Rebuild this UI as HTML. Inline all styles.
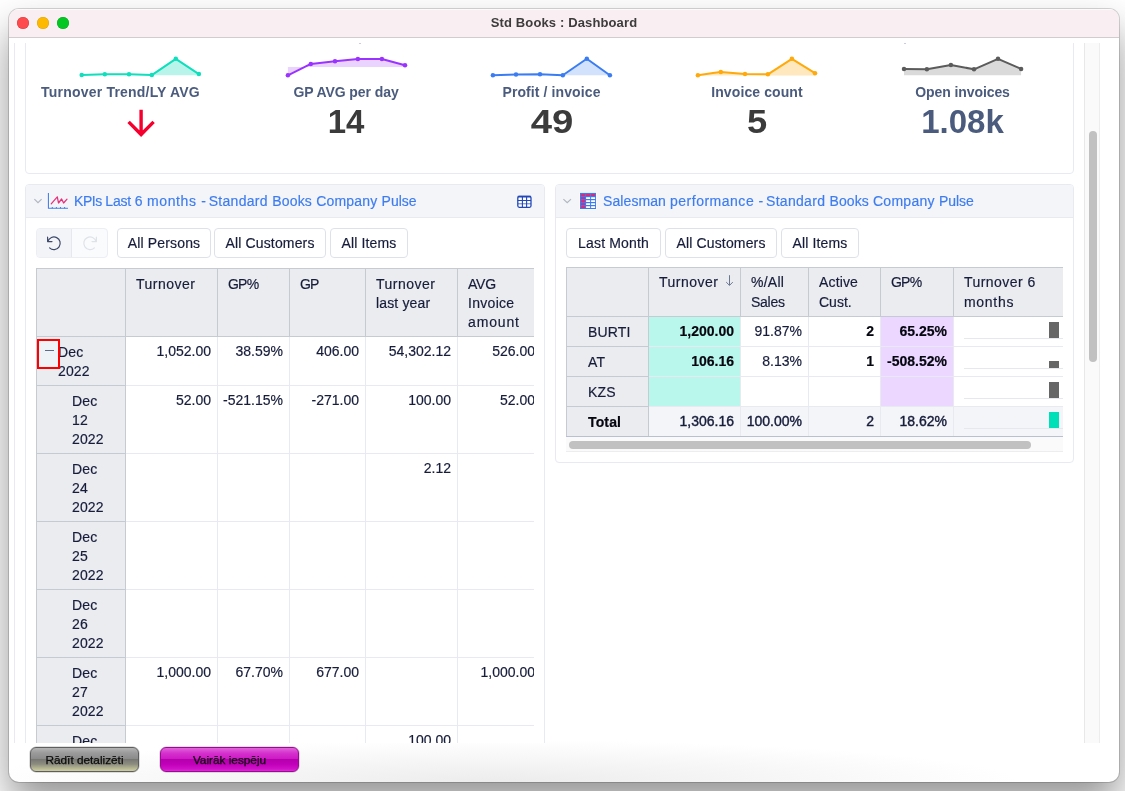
<!DOCTYPE html>
<html lang="en">
<head>
<meta charset="utf-8">
<title>Std Books : Dashboard</title>
<style>
*{box-sizing:border-box;margin:0;padding:0}
html,body{width:1125px;height:791px;overflow:hidden;background:#fff}
body{font-family:"Liberation Sans",sans-serif;position:relative;background:#fff}
.abs{position:absolute}
#win{position:absolute;left:9px;top:9px;width:1110px;height:773px;background:radial-gradient(ellipse 520px 42px at 44% 100%,#ececec 0,rgba(255,255,255,0) 100%) #fff;border-radius:10px;
  box-shadow:0 0 0 1px rgba(0,0,0,.16),0 22px 40px 0 rgba(0,0,0,.42);overflow:hidden;will-change:transform}
#tbar{position:absolute;left:0;top:0;width:100%;height:29px;background:#f9eff3;border-bottom:1px solid #d2ccce;box-shadow:inset 0 1px 0 rgba(255,255,255,.7);
  text-align:center;font-weight:700;font-size:13px;line-height:28px;color:#3d3b3c;letter-spacing:.13px}
.tl{position:absolute;top:8px;width:12px;height:12px;border-radius:50%}
/* web view : page coords x14..1100, y43..743 => win coords x5..1091, y35..735 */
#web{position:absolute;left:5px;top:34px;width:1086px;height:700px;overflow:hidden;
  font-size:14px;color:#161c3a;letter-spacing:.15px;-webkit-text-stroke:.18px}
#vsb{position:absolute;left:1070px;top:0;width:16px;height:700px;background:#fafafa;border-left:1px solid #e8e8e8;border-right:1px solid #ededed}
#vsb i{position:absolute;left:4px;top:88px;width:8px;height:231px;border-radius:4px;background:#c1c1c1}
.panel{position:absolute;border:1px solid #e9eaf1;border-radius:4px;background:#fff}
.phead{position:absolute;left:0;top:0;right:0;height:33px;background:#f4f5f8;border-bottom:1px solid #e9eaf1;border-radius:3px 3px 0 0}
.ptitle{position:absolute;top:0;line-height:33px;color:#3d7cf0;font-size:14px;white-space:nowrap;letter-spacing:.14px}
.btn{position:absolute;top:43px;height:30px;border:1px solid #dfe1e8;border-radius:4px;background:#fff;line-height:29px;text-align:center;white-space:nowrap;color:#161c3a}
table{border-collapse:separate;border-spacing:0;table-layout:fixed;position:absolute}
td,th{font-weight:400;vertical-align:top;line-height:19px;padding:6px 6px 4px 10px;overflow:hidden}
.klab{-webkit-text-stroke:0;position:absolute;top:41px;width:206px;text-align:center;font-weight:700;font-size:14px;line-height:16px;color:#4a5b7d;letter-spacing:-.08px;white-space:nowrap}
.knum{-webkit-text-stroke:0;position:absolute;top:61px;width:206px;text-align:center;font-weight:700;font-size:33px;line-height:36px;color:#3b3b3b;letter-spacing:0;white-space:nowrap}
.mbtn{position:absolute;top:738px;height:25px;border:1px solid #5e5e5e;border-radius:6px;text-align:center;font-size:11.8px;line-height:24px;color:#0c0c0c;-webkit-text-stroke:.25px #0c0c0c;white-space:nowrap;box-shadow:0 0 0 .5px rgba(0,0,0,.25)}
table.lt,table.rt{border-left:1px solid #c5cad3;border-top:1px solid #c5cad3}
th{background:#ebecf0;border-right:1px solid #c5cad3;border-bottom:1px solid #c5cad3;text-align:left}
td{border-right:1px solid #e9eaf1;border-bottom:1px solid #e9eaf1;text-align:right;white-space:nowrap;letter-spacing:0;padding-left:2px}
.lt tr{height:68px}.lt tr.r1{height:49px}
.lt th.sub{padding-left:35px}
.rt tr{height:30px}.rt tr.hr{height:49px}
.rt td,.rt th{padding-top:5px;padding-bottom:4px}
.lt td,.lt th{padding-top:4.6px;padding-bottom:5.4px}
.lt .hr th{padding-top:6px;padding-bottom:4px}
.lt tr:not(.hr) th{padding-top:6px;padding-bottom:4px}
.rt tr:not(.hr) th{padding-left:21px}
.rt tr.hr th{line-height:19.5px;padding-top:5.2px;padding-bottom:3px}
.b{font-weight:700;color:#05060f}
.rt tr:not(.hr) th{padding-top:6px;padding-bottom:3px}
.tq{background:#b9f6ec}.pu{background:#ebd7ff}
.tot td{background:#f4f5f8;-webkit-text-stroke:.4px #161c3a}
td.bar{position:relative;padding:0}
td.bar:before{content:"";position:absolute;left:10px;right:0;top:21px;height:1px;background:#e6e8ed}
td.bar i{position:absolute;left:95px;width:10px;background:#666}
</style>
</head>
<body>
<div id="win">
  <div id="tbar">Std Books : Dashboard
    <span class="tl" style="left:8px;background:#fe4a4c;box-shadow:inset 0 0 0 .5px #e0393b"></span>
    <span class="tl" style="left:28px;background:#fdb900;box-shadow:inset 0 0 0 .5px #e0a300"></span>
    <span class="tl" style="left:48px;background:#04c723;box-shadow:inset 0 0 0 .5px #03ae1f"></span>
  </div>
  <div id="web">
    <div id="vsb"><i></i></div>
    <div class="abs" style="left:0;top:0;width:1px;height:700px;background:#e9eaf1"></div>
    <div class="panel" style="left:11px;top:-20px;width:1049px;height:151px"></div>
    <svg class="abs" style="left:0;top:0" width="1086" height="700" viewBox="14 42.7 1086 700" fill="none" stroke-linejoin="round" stroke-linecap="round">
      <!-- sparkline 1 -->
      <polygon points="151.8,74.8 175.8,58.5 198.9,73.8 198.9,75 151.8,75" fill="#b9f4ea"/>
      <polyline points="81.7,74.8 104.8,73.9 129,73.9 151.8,74.8 175.8,58.5 198.9,73.8" stroke="#0fdfbc" stroke-width="2"/>
      <g fill="#0fdfbc"><circle cx="81.7" cy="74.8" r="2.25"/><circle cx="104.8" cy="73.9" r="2.25"/><circle cx="129" cy="73.9" r="2.25"/><circle cx="151.8" cy="74.8" r="2.25"/><circle cx="175.8" cy="58.5" r="2.25"/><circle cx="198.9" cy="73.8" r="2.25"/></g>
      <!-- sparkline 2 -->
      <polygon points="287.9,75 310.8,63.6 335,61 357.9,58.7 381.9,58.7 405,64.9 405,66.7 287.9,66.7" fill="#ead3ff"/>
      <polyline points="287.9,75 310.8,63.6 335,61 357.9,58.7 381.9,58.7 405,64.9" stroke="#9a33ff" stroke-width="2"/>
      <g fill="#9a33ff"><circle cx="287.9" cy="75" r="2.25"/><circle cx="310.8" cy="63.6" r="2.25"/><circle cx="335" cy="61" r="2.25"/><circle cx="357.9" cy="58.7" r="2.25"/><circle cx="381.9" cy="58.7" r="2.25"/><circle cx="405" cy="64.9" r="2.25"/></g>
      <!-- sparkline 3 -->
      <polygon points="562.8,75 586.8,58.5 609.9,75" fill="#d2e1fc"/>
      <polyline points="492.9,75 516,74.3 540,73.9 562.8,75 586.8,58.5 609.9,75" stroke="#3a7df2" stroke-width="2"/>
      <g fill="#3a7df2"><circle cx="492.9" cy="75" r="2.25"/><circle cx="516" cy="74.3" r="2.25"/><circle cx="540" cy="73.9" r="2.25"/><circle cx="562.8" cy="75" r="2.25"/><circle cx="586.8" cy="58.5" r="2.25"/><circle cx="609.9" cy="75" r="2.25"/></g>
      <!-- sparkline 4 -->
      <polygon points="697.9,75 720.8,71.6 745,73.8 767.9,74 791.9,58.5 815,72.9 815,75.2 697.9,75.2" fill="#ffe8bd"/>
      <polyline points="697.9,75 720.8,71.6 745,73.8 767.9,74 791.9,58.5 815,72.9" stroke="#ffa90a" stroke-width="2"/>
      <g fill="#ffa90a"><circle cx="697.9" cy="75" r="2.25"/><circle cx="720.8" cy="71.6" r="2.25"/><circle cx="745" cy="73.8" r="2.25"/><circle cx="767.9" cy="74" r="2.25"/><circle cx="791.9" cy="58.5" r="2.25"/><circle cx="815" cy="72.9" r="2.25"/></g>
      <!-- sparkline 5 -->
      <polygon points="904,68.6 926.9,69 950.9,64.7 974,69 998,58.5 1021.1,68.6 1021.1,75 904,75" fill="#dadada"/>
      <polyline points="904,68.6 926.9,69 950.9,64.7 974,69 998,58.5 1021.1,68.6" stroke="#5b5b5b" stroke-width="2"/>
      <g fill="#5b5b5b"><circle cx="904" cy="68.6" r="2.25"/><circle cx="926.9" cy="69" r="2.25"/><circle cx="950.9" cy="64.7" r="2.25"/><circle cx="974" cy="69" r="2.25"/><circle cx="998" cy="58.5" r="2.25"/><circle cx="1021.1" cy="68.6" r="2.25"/></g>
      <!-- red arrow -->
      <path d="M141.1 109.5V134M128.6 121.6L141.1 134.2L153.6 121.6" stroke="#f5002e" stroke-width="3.4" stroke-linecap="butt" stroke-linejoin="miter"/>
    </svg>
    <div class="abs" style="left:345px;top:0;width:2px;height:1px;background:#c9cde0"></div><div class="abs" style="left:890px;top:0;width:2px;height:1px;background:#c9cde0"></div>
    <div class="klab" style="left:-17px;width:247px;letter-spacing:.2px">Turnover Trend/LY AVG</div>
    <div class="klab" style="left:229px">GP AVG per day</div>
    <div class="knum" style="left:229px">14</div>
    <div class="klab" style="left:434.5px;letter-spacing:.1px">Profit / invoice</div>
    <div class="knum" style="left:434.5px;transform:scaleX(1.16)">49</div>
    <div class="klab" style="left:640px;letter-spacing:.1px">Invoice count</div>
    <div class="knum" style="left:640px;transform:scaleX(1.1)">5</div>
    <div class="klab" style="left:845.5px">Open invoices</div>
    <div class="knum" style="left:845.5px;color:#4a5b7d">1.08k</div>
    <div class="panel" style="left:11px;top:141px;width:520px;height:620px">
      <div class="phead"></div>
      <svg class="abs" style="left:0;top:0" width="518" height="33" viewBox="26 185 518 33" fill="none">
        <path d="M34.4 199.1L38 202.6L41.6 199.1" stroke="#b2b7c2" stroke-width="1.2"/>
        <path d="M48.4 193V208.3H68" stroke="#fffdf6" stroke-width="2.6"/>
        <path d="M48.4 193V208.3H68" stroke="#3d7cf0" stroke-width="1.1"/>
        <path d="M52.3 207v1.3M56.4 207v1.3M60.5 207v1.3M64.6 207v1.3" stroke="#3d7cf0" stroke-width="1"/>
        <path d="M51.2 203.8L57.3 196.8L58.5 203L61.6 199L63.6 203L67 199.2" stroke="#e8307a" stroke-width="1.25" stroke-linejoin="round" stroke-linecap="round"/>
        <rect x="517" y="195.5" width="14.6" height="12.4" rx="2" fill="#fff" opacity=".8"/>
        <rect x="517.8" y="196.3" width="13.2" height="11" rx="1.5" fill="#fff" stroke="#2147b8" stroke-width="1.3"/>
        <path d="M517.8 196.7H531" stroke="#2147b8" stroke-width="1.8"/>
        <path d="M522.4 196.3V207.3M526.6 196.3V207.3M517.8 200.5H531" stroke="#2147b8" stroke-width="1.1"/>
        <path d="M517.8 203.8H531" stroke="#2147b8" stroke-width="1" opacity=".75"/>
      </svg>
      <div class="ptitle" style="left:48px"><span style="letter-spacing:-0.43px">KPIs </span><span style="letter-spacing:-0.19px">Last </span><span style="letter-spacing:0.26px">6 </span><span style="letter-spacing:0.63px">months </span><span style="letter-spacing:-0.53px">- </span><span style="letter-spacing:0.31px">Standard </span><span style="letter-spacing:0.20px">Books </span><span style="letter-spacing:0.20px">Company </span><span style="letter-spacing:-0.01px">Pulse</span></div>
      <div class="abs" style="left:10px;top:43px;width:72px;height:30px;border:1px solid #eceef2;border-radius:4px;background:#fafbfc;overflow:hidden">
        <div class="abs" style="left:0;top:0;width:35px;height:28px;background:#f3f4f7;border-right:1px solid #e6e8ee"></div>
        <svg class="abs" style="left:0;top:0" width="70" height="28" viewBox="37 229 70 28" fill="none" stroke-linecap="round" stroke-linejoin="round">
          <path d="M47.6 237.2V241.6H52M47.9 241.4A6.3 6.3 0 1 1 49.6 247.9" stroke="#3f4a6b" stroke-width="1.2"/>
          <path d="M96.4 237.2V241.6H92M96.1 241.4A6.3 6.3 0 1 0 94.4 247.9" stroke="#dfe2e8" stroke-width="1.2"/>
        </svg>
      </div>
      <div class="btn" style="left:91px;width:94px">All Persons</div>
      <div class="btn" style="left:188px;width:112px">All Customers</div>
      <div class="btn" style="left:304px;width:78px">All Items</div>
      <div class="abs" style="left:10px;top:83px;width:498px;height:520px;overflow:hidden">
        <table class="lt" style="left:0;top:0;width:506px">
          <colgroup><col style="width:89px"><col style="width:92px"><col style="width:72px"><col style="width:76px"><col style="width:92px"><col style="width:84px"></colgroup>
          <tr class="hr"><th></th><th><span style="letter-spacing:0.5px">Turnover</span></th><th><span style="letter-spacing:-0.8px">GP%</span></th><th><span style="letter-spacing:-0.9px">GP</span></th><th><span style="letter-spacing:0.5px">Turnover</span><br><span style="letter-spacing:0.15px">last year</span></th><th><span style="letter-spacing:-0.2px">AVG</span><br><span style="letter-spacing:0.3px">Invoice</span><br><span style="letter-spacing:0.85px">amount</span></th></tr>
          <tr class="r1"><th style="padding-left:21px">Dec<br>2022</th><td>1,052.00</td><td>38.59%</td><td>406.00</td><td>54,302.12</td><td>526.00</td></tr>
          <tr><th class="sub">Dec<br>12<br>2022</th><td>52.00</td><td>-521.15%</td><td>-271.00</td><td>100.00</td><td>52.00</td></tr>
          <tr><th class="sub">Dec<br>24<br>2022</th><td></td><td></td><td></td><td>2.12</td><td></td></tr>
          <tr><th class="sub">Dec<br>25<br>2022</th><td></td><td></td><td></td><td></td><td></td></tr>
          <tr><th class="sub">Dec<br>26<br>2022</th><td></td><td></td><td></td><td></td><td></td></tr>
          <tr><th class="sub">Dec<br>27<br>2022</th><td>1,000.00</td><td>67.70%</td><td>677.00</td><td></td><td>1,000.00</td></tr>
          <tr><th class="sub">Dec<br>28<br>2022</th><td></td><td></td><td></td><td>100.00</td><td></td></tr>
        </table>
        <div class="abs" style="left:1px;top:71px;width:23px;height:30px;border:2px solid #ff0000;background:#eef3f7"></div>
        <div class="abs" style="left:9px;top:82px;width:9px;height:1px;background:#5f6a88"></div>
      </div>
    </div>
    <div class="panel" style="left:541px;top:141px;width:519px;height:279px">
      <div class="phead"></div>
      <svg class="abs" style="left:0;top:0" width="517" height="33" viewBox="556 185 517 33" fill="none">
        <path d="M563.4 199.1L567.2 202.7L571 199.1" stroke="#b2b7c2" stroke-width="1.2"/>
        <rect x="579.4" y="192.3" width="17.2" height="17.3" fill="#fffdf6"/>
        <rect x="580" y="192.9" width="16" height="16.1" fill="#3d7cf0"/>
        <rect x="581.1" y="194.2" width="4" height="1.8" fill="#f0216b"/><rect x="586.1" y="194.2" width="4" height="1.8" fill="#f0216b"/><rect x="591.1" y="194.2" width="4" height="1.8" fill="#f0216b"/><rect x="581.1" y="197.2" width="4" height="1.8" fill="#f0216b"/><rect x="586.1" y="197.2" width="4" height="1.8" fill="#fff"/><rect x="591.1" y="197.2" width="4" height="1.8" fill="#fff"/><rect x="581.1" y="200.2" width="4" height="1.8" fill="#f0216b"/><rect x="586.1" y="200.2" width="4" height="1.8" fill="#fff"/><rect x="591.1" y="200.2" width="4" height="1.8" fill="#fff"/><rect x="581.1" y="203.2" width="4" height="1.8" fill="#f0216b"/><rect x="586.1" y="203.2" width="4" height="1.8" fill="#fff"/><rect x="591.1" y="203.2" width="4" height="1.8" fill="#fff"/><rect x="581.1" y="206.2" width="4" height="1.8" fill="#f0216b"/><rect x="586.1" y="206.2" width="4" height="1.8" fill="#fff"/><rect x="591.1" y="206.2" width="4" height="1.8" fill="#fff"/>
      </svg>
      <div class="ptitle" style="left:47px;letter-spacing:.24px"><span style="letter-spacing:0.09px">Salesman </span><span style="letter-spacing:0.51px">performance </span><span style="letter-spacing:-0.58px">- </span><span style="letter-spacing:0.31px">Standard </span><span style="letter-spacing:0.11px">Books </span><span style="letter-spacing:0.27px">Company </span><span style="letter-spacing:-0.03px">Pulse</span></div>
      <div class="btn" style="left:10px;width:95px">Last Month</div>
      <div class="btn" style="left:109px;width:112px">All Customers</div>
      <div class="btn" style="left:225px;width:78px">All Items</div>
      <div class="abs" style="left:10px;top:82px;width:497px;height:186px;overflow:hidden">
        <table class="rt" style="left:0;top:0;width:515px">
          <colgroup><col style="width:82px"><col style="width:92px"><col style="width:68px"><col style="width:72px"><col style="width:73px"><col style="width:127px"></colgroup>
          <tr class="hr"><th></th><th style="position:relative"><span style="letter-spacing:0.5px">Turnover</span><svg style="position:absolute;left:75px;top:6px" width="10" height="13" viewBox="723.9 274 10 13" fill="none"><path d="M729.4 275.2V285.2M726.1 282.1L729.4 285.4L732.7 282.1" stroke="#6c7893" stroke-width="1"/></svg></th><th><span style="letter-spacing:0.25px">%/All</span><br><span style="letter-spacing:-0.25px">Sales</span></th><th><span style="letter-spacing:0.15px">Active</span><br><span style="letter-spacing:0px">Cust.</span></th><th><span style="letter-spacing:-0.8px">GP%</span></th><th><span style="letter-spacing:0.45px">Turnover 6</span><br><span style="letter-spacing:0.7px">months</span></th></tr>
          <tr><th>BURTI</th><td class="tq b">1,200.00</td><td>91.87%</td><td class="b">2</td><td class="pu b">65.25%</td><td class="bar"><i style="height:16px;top:5px"></i></td></tr>
          <tr><th>AT</th><td class="tq b">106.16</td><td>8.13%</td><td class="b">1</td><td class="pu b">-508.52%</td><td class="bar"><i style="height:7px;top:14px"></i></td></tr>
          <tr><th>KZS</th><td class="tq"></td><td></td><td></td><td class="pu"></td><td class="bar"><i style="height:16px;top:5px"></i></td></tr>
          <tr class="tot"><th class="b">Total</th><td>1,306.16</td><td>100.00%</td><td>2</td><td>18.62%</td><td class="bar"><i style="height:16px;top:5px;background:#00e0b8"></i></td></tr>
        </table>
        <div class="abs" style="left:0;top:170px;width:515px;height:15px;background:#fafafa;border-bottom:1px solid #ededef"></div>
        <div class="abs" style="left:0;top:169px;width:515px;height:1px;background:#b9c1d0"></div>
        <div class="abs" style="left:3px;top:174px;width:462px;height:8px;border-radius:4px;background:#c1c1c1"></div>
      </div>
    </div>
  </div>
  <div class="mbtn" style="left:21px;width:109px;background:linear-gradient(180deg,#b4b4b4 0,#9a9a9a 22%,#8b8b8b 47%,#777772 49%,#8c8c80 70%,#b9b994 90%,#cdcda4 100%)">Rādīt detalizēti</div>
  <div class="mbtn" style="left:151px;width:139px;background:linear-gradient(180deg,#e263dc 0,#d532cd 22%,#cd19c4 47%,#b400ac 49%,#c000b8 70%,#d010c8 90%,#dc2ad4 100%);border-color:#9a0a92">Vairāk iespēju</div>
</div>
</body>
</html>
